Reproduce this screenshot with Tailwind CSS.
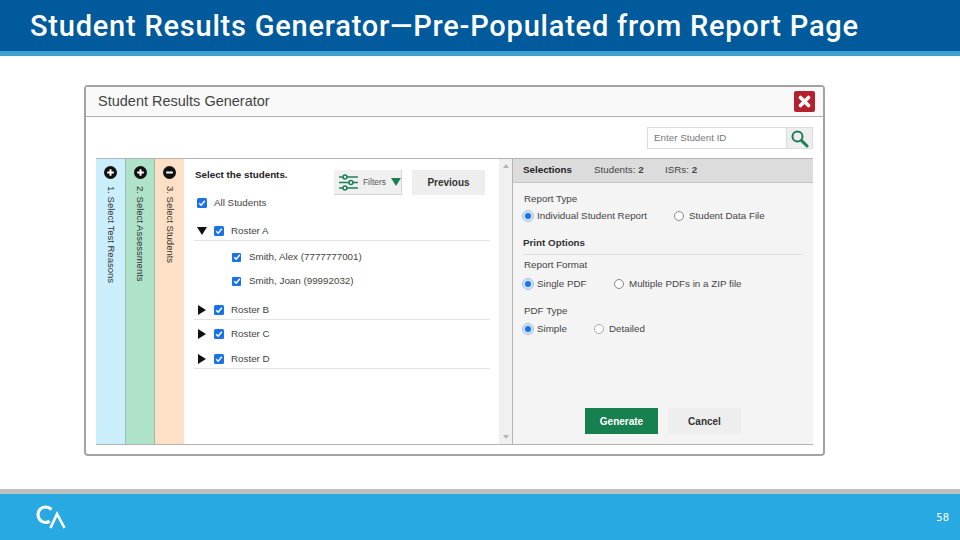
<!DOCTYPE html>
<html lang="en">
<head>
<meta charset="UTF-8">
<title>Student Results Generator</title>
<script src="https://cdn.jsdelivr.net/npm/@tailwindcss/browser@4"></script>
</head>
<body class="w-[960px] h-[540px] overflow-hidden bg-white flex flex-col [font-family:'Liberation_Sans',Arial,sans-serif] text-[#222]">

  <!-- slide header -->
  <header class="h-[56px] shrink-0 bg-[#005a9c] border-b-[5px] border-[#3b9fd0] pl-[30px] pt-[10px]">
    <h1 class="text-[29px] leading-[33px] [font-family:Roboto,sans-serif] font-medium tracking-[0.78px] text-white whitespace-nowrap">Student Results Generator—Pre-Populated from Report Page</h1>
  </header>

  <main class="flex-1 pl-[84px] pt-[29px]">
    <!-- dialog -->
    <div class="w-[741px] h-[371px] border-2 border-[#a3a3a3] rounded-[4px] bg-white flex flex-col">
      <div class="h-[30px] shrink-0 bg-[#f9f9f9] border-b border-[#b0b0b0] flex items-center justify-between pl-[12px] pr-[8px]">
        <span class="text-[14.5px] pt-[1px] text-[#444]">Student Results Generator</span>
        <button class="w-[21px] h-[21px] bg-[#b5202f] rounded-[2px] flex items-center justify-center">
          <svg width="13" height="13" viewBox="0 0 13 13"><path d="M2.500 2.500 10.500 10.500M10.500 2.500 2.500 10.500" stroke="#fff" stroke-width="3.600" stroke-linecap="round"/></svg>
        </button>
      </div>

      <div class="flex-1 pl-[10px] pr-[10px] flex flex-col">
        <div class="flex justify-end pt-[10px] h-[41px] shrink-0">
          <div class="flex w-[166px] h-[22px] border border-[#dcdcdc]">
            <span class="flex-1 pl-[6px] text-[9.800px] leading-[20px] text-[#777]">Enter Student ID</span>
            <span class="w-[26px] bg-[#eeeeee] border-l border-[#dcdcdc] flex items-center justify-center">
              <svg width="19" height="19" viewBox="0 0 19 19" fill="none"><circle cx="7.500" cy="7.500" r="5" stroke="#1b7f54" stroke-width="2"/><path d="M11.500 11.500 17 17" stroke="#1b7f54" stroke-width="3" stroke-linecap="round"/></svg>
            </span>
          </div>
        </div>

        <!-- generator panel -->
        <div class="w-[717px] h-[287px] border-t border-b border-[#b4b4b4] flex">
          <!-- accordion steps -->
          <div class="w-[30px] bg-[#cbeefd] border-r border-[#9fb8b0] flex flex-col items-center pt-[7px] gap-[7px]">
            <svg width="13" height="13" viewBox="0 0 13 13"><circle cx="6.500" cy="6.500" r="6.500" fill="#111"/><path d="M3.200 6.500h6.600M6.500 3.200v6.600" stroke="#fff" stroke-width="2"/></svg>
            <span class="[writing-mode:vertical-rl] text-[9.500px] leading-[12px] text-[#333] whitespace-nowrap">1. Select Test Reasons</span>
          </div>
          <div class="w-[29px] bg-[#aee2c9] border-r border-[#9fb8b0] flex flex-col items-center pt-[7px] gap-[7px]">
            <svg width="13" height="13" viewBox="0 0 13 13"><circle cx="6.500" cy="6.500" r="6.500" fill="#111"/><path d="M3.200 6.500h6.600M6.500 3.200v6.600" stroke="#fff" stroke-width="2"/></svg>
            <span class="[writing-mode:vertical-rl] text-[9.500px] leading-[12px] text-[#333] whitespace-nowrap">2. Select Assessments</span>
          </div>
          <div class="w-[29px] bg-[#fde0c5] flex flex-col items-center pt-[7px] gap-[7px]">
            <svg width="13" height="13" viewBox="0 0 13 13"><circle cx="6.500" cy="6.500" r="6.500" fill="#111"/><path d="M3.200 6.500h6.600" stroke="#fff" stroke-width="2"/></svg>
            <span class="[writing-mode:vertical-rl] text-[9.500px] leading-[12px] text-[#333] whitespace-nowrap">3. Select Students</span>
          </div>

          <!-- student picker -->
          <div class="w-[315px] pl-[10px] pr-[9px] pt-[8px]">
            <div class="flex items-start h-[28px]">
              <span class="ml-[1px] w-[139px] pt-[2px] text-[9.800px] leading-[12px] font-bold text-[#222] whitespace-nowrap">Select the students.</span>
              <div class="mt-[3px] w-[68px] h-[25px] bg-[#f0f0f0] border-r border-b border-[#d4d4d4] flex items-center pl-[5px] gap-[5px]">
                <svg width="19" height="19" viewBox="0 0 19 19" fill="none" stroke="#1b7f54" stroke-width="1.500"><path d="M0 4h19M0 9.500h19M0 15h19"/><circle cx="6" cy="4" r="2" fill="#f0f0f0"/><circle cx="12" cy="9.500" r="2" fill="#f0f0f0"/><circle cx="6" cy="15" r="2" fill="#f0f0f0"/></svg>
                <span class="text-[8.500px] text-[#555]">Filters</span>
                <svg width="10" height="8" viewBox="0 0 10 8"><path d="M0 0h10L5 8z" fill="#1b7f54"/></svg>
              </div>
              <button class="mt-[3px] ml-[10px] w-[73px] h-[25px] bg-[#eeeeee] text-[10px] font-bold text-[#333]">Previous</button>
            </div>

            <div class="flex items-center h-[14px] mt-[1px] gap-[7px]">
              <span class="w-[10px] h-[10px] ml-[3px] bg-[#1a73e8] rounded-[1.500px] flex items-center justify-center"><svg width="8" height="8" viewBox="0 0 8 8" fill="none"><path d="M1.200 4.200 3.200 6.200 6.800 1.800" stroke="#fff" stroke-width="1.500"/></svg></span>
              <span class="text-[9.800px] text-[#444]">All Students</span>
            </div>

            <div class="flex items-center h-[19px] mt-[12px] border-b border-[#e3e3e3]">
              <svg class="ml-[3px]" width="10" height="8" viewBox="0 0 10 8"><path d="M0 0h10L5 8z" fill="#111"/></svg>
              <span class="ml-[7px] w-[10px] h-[10px] bg-[#1a73e8] rounded-[1.500px] flex items-center justify-center"><svg width="8" height="8" viewBox="0 0 8 8" fill="none"><path d="M1.200 4.200 3.200 6.200 6.800 1.800" stroke="#fff" stroke-width="1.500"/></svg></span>
              <span class="ml-[7px] text-[9.800px] text-[#444]">Roster A</span>
            </div>
            <div class="flex items-center h-[24px] mt-[4px] pl-[38px] gap-[8px]">
              <span class="w-[9px] h-[9px] bg-[#1a73e8] rounded-[1px] flex items-center justify-center"><svg width="8" height="8" viewBox="0 0 8 8" fill="none"><path d="M1.200 4.200 3.200 6.200 6.800 1.800" stroke="#fff" stroke-width="1.500"/></svg></span>
              <span class="text-[9.800px] text-[#444]">Smith, Alex (7777777001)</span>
            </div>
            <div class="flex items-center h-[24px] pl-[38px] gap-[8px]">
              <span class="w-[9px] h-[9px] bg-[#1a73e8] rounded-[1px] flex items-center justify-center"><svg width="8" height="8" viewBox="0 0 8 8" fill="none"><path d="M1.200 4.200 3.200 6.200 6.800 1.800" stroke="#fff" stroke-width="1.500"/></svg></span>
              <span class="text-[9.800px] text-[#444]">Smith, Joan (99992032)</span>
            </div>

            <div class="flex items-center h-[19px] mt-[8px] border-b border-[#e3e3e3]">
              <svg class="ml-[4px]" width="8" height="10" viewBox="0 0 8 10"><path d="M0 0v10L8 5z" fill="#111"/></svg>
              <span class="ml-[8px] w-[10px] h-[10px] bg-[#1a73e8] rounded-[1.500px] flex items-center justify-center"><svg width="8" height="8" viewBox="0 0 8 8" fill="none"><path d="M1.200 4.200 3.200 6.200 6.800 1.800" stroke="#fff" stroke-width="1.500"/></svg></span>
              <span class="ml-[7px] text-[9.800px] text-[#444]">Roster B</span>
            </div>
            <div class="flex items-center h-[24px] mt-[2px]">
              <svg class="ml-[4px]" width="8" height="10" viewBox="0 0 8 10"><path d="M0 0v10L8 5z" fill="#111"/></svg>
              <span class="ml-[8px] w-[10px] h-[10px] bg-[#1a73e8] rounded-[1.500px] flex items-center justify-center"><svg width="8" height="8" viewBox="0 0 8 8" fill="none"><path d="M1.200 4.200 3.200 6.200 6.800 1.800" stroke="#fff" stroke-width="1.500"/></svg></span>
              <span class="ml-[7px] text-[9.800px] text-[#444]">Roster C</span>
            </div>
            <div class="flex items-center h-[19px] mt-[4px] border-b border-[#e3e3e3]">
              <svg class="ml-[4px]" width="8" height="10" viewBox="0 0 8 10"><path d="M0 0v10L8 5z" fill="#111"/></svg>
              <span class="ml-[8px] w-[10px] h-[10px] bg-[#1a73e8] rounded-[1.500px] flex items-center justify-center"><svg width="8" height="8" viewBox="0 0 8 8" fill="none"><path d="M1.200 4.200 3.200 6.200 6.800 1.800" stroke="#fff" stroke-width="1.500"/></svg></span>
              <span class="ml-[7px] text-[9.800px] text-[#444]">Roster D</span>
            </div>
          </div>

          <!-- scrollbar -->
          <div class="w-[13px] bg-[#f0f0f0] flex flex-col items-center justify-between py-[5px]">
            <svg width="6" height="4" viewBox="0 0 6 4"><path d="M0 4h6L3 0z" fill="#b5b5b5"/></svg>
            <svg width="6" height="4" viewBox="0 0 6 4"><path d="M0 0h6L3 4z" fill="#b5b5b5"/></svg>
          </div>

          <!-- selections -->
          <div class="flex-1 bg-[#f4f4f4] border-l border-[#b4b4b4] flex flex-col">
            <div class="h-[24px] shrink-0 bg-[#dcdcdc] border-b border-[#c4c4c4] flex items-center pl-[10px] text-[9.800px] text-[#444]">
              <span class="w-[71px] font-bold text-[#222]">Selections</span>
              <span class="w-[71px]">Students: <b>2</b></span>
              <span>ISRs: <b>2</b></span>
            </div>
            <div class="flex-1 pl-[10px] pr-[10px] flex flex-col">
              <p class="mt-[10px] pl-[1px] text-[9.800px] leading-[12px] text-[#444]">Report Type</p>
              <div class="flex items-center h-[14px] mt-[4px] text-[9.800px] text-[#444]">
                <span class="w-[10px] h-[10px] rounded-full border-[2px] border-[#cfe3fa] bg-[#1a73e8] outline outline-[#1a73e8]/40"></span>
                <span class="ml-[4px] w-[137px]">Individual Student Report</span>
                <span class="w-[10px] h-[10px] rounded-full border border-[#888] bg-white"></span>
                <span class="ml-[5px]">Student Data File</span>
              </div>
              <p class="mt-[14px] text-[9.800px] leading-[12px] font-bold text-[#333] border-b border-[#dedede] pb-[5px]">Print Options</p>
              <p class="mt-[4px] pl-[1px] text-[9.800px] leading-[12px] text-[#444]">Report Format</p>
              <div class="flex items-center h-[14px] mt-[6px] text-[9.800px] text-[#444]">
                <span class="w-[10px] h-[10px] rounded-full border-[2px] border-[#cfe3fa] bg-[#1a73e8] outline outline-[#1a73e8]/40"></span>
                <span class="ml-[4px] w-[77px]">Single PDF</span>
                <span class="w-[10px] h-[10px] rounded-full border border-[#888] bg-white"></span>
                <span class="ml-[5px]">Multiple PDFs in a ZIP file</span>
              </div>
              <p class="mt-[14px] pl-[1px] text-[9.800px] leading-[12px] text-[#444]">PDF Type</p>
              <div class="flex items-center h-[14px] mt-[5px] text-[9.800px] text-[#444]">
                <span class="w-[10px] h-[10px] rounded-full border-[2px] border-[#cfe3fa] bg-[#1a73e8] outline outline-[#1a73e8]/40"></span>
                <span class="ml-[4px] w-[57px]">Simple</span>
                <span class="w-[10px] h-[10px] rounded-full border border-[#aaa] bg-white"></span>
                <span class="ml-[5px]">Detailed</span>
              </div>
              <div class="mt-auto mb-[10px] flex pl-[62px] gap-[10px]">
                <button class="w-[73px] h-[26px] bg-[#17804f] text-white text-[10px] font-bold">Generate</button>
                <button class="w-[73px] h-[26px] bg-[#eeeeee] text-[#333] text-[10px] font-bold">Cancel</button>
              </div>
            </div>
          </div>
        </div>
      </div>
    </div>
  </main>

  <!-- slide footer -->
  <footer class="h-[51px] shrink-0 bg-[#29a9e1] border-t-[5px] border-[#bfbfbf] flex items-center justify-between pl-[36px] pr-[11px]">
    <svg width="31" height="24" viewBox="0 0 31 24" fill="none" stroke="#fff"><path d="M15.500 4.500C13.500 2.500 11.500 2 9.500 2 5 2 2 5.500 2 9.500s3 8 7.500 8c1.500 0 3-.5 4-1.500" stroke-width="3.200"/><path d="M14.500 23 21 9l7.500 14" stroke-width="2.600"/></svg>
    <span class="text-[10px] text-white [font-family:'DejaVu_Sans',sans-serif]">58</span>
  </footer>
</body>
</html>
